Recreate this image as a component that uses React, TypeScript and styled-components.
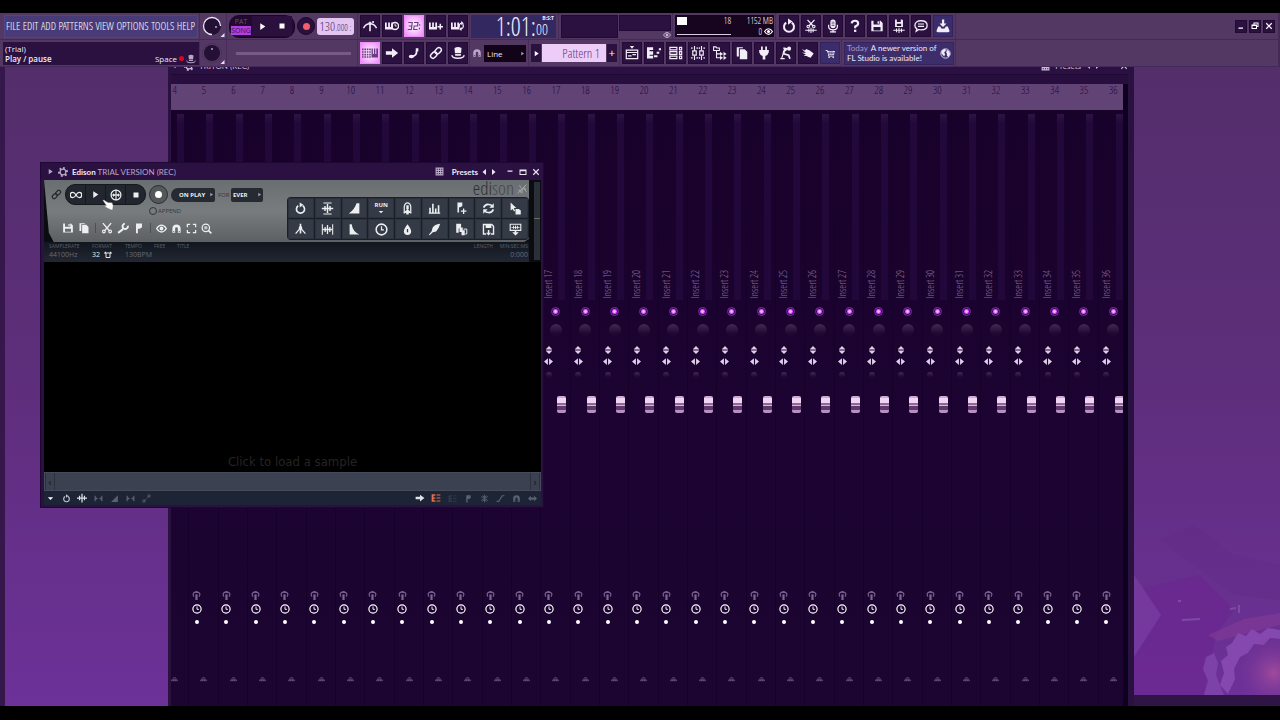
import React from "react";
import styled, { createGlobalStyle, css } from "styled-components";

const GlobalStyle = createGlobalStyle`
  * { box-sizing: border-box; }
  html, body { margin: 0; background: #000; }
  body { font-family: "Open Sans", "Noto Sans", sans-serif; color: #fff; overflow: hidden; }
  button, input, select { font: inherit; color: inherit; margin: 0; padding: 0; border: 0; background: none; border-radius: 0; }
  button { display: flex; align-items: center; justify-content: center; }
  svg { display: block; flex: none; }
`;

const narrow = `"Open Sans Condensed Light", "Open Sans Condensed", "Open Sans", sans-serif`;

/* ---------- icons, all on a 16 unit grid ---------- */

const line = { fill: "none", stroke: "currentColor", strokeWidth: 1.6 } as const;
const undoArt = (
  <>
    <path {...line} strokeWidth={2} d="M5.2 4.6A5 5 0 1 0 10.8 4.6" />
    <path d="M7 0.6v6.2L11.6 3.4z" />
  </>
);
const keysArt = <path d="M0 4h2v5h1.6V4h2v5h1.6V4h2v8H0z" />;
const saveArt = <path fillRule="evenodd" d="M1.5 2H12l2.5 2.5V14h-13zM4 2v4.2h7V2zM4 9v4h8V9zM8.6 2.6h1.6v2.8H8.6z" />;
const metronomeArt = (
  <>
    <path {...line} d="M8 6L2 13M8 6l6 7" />
    <path d="M7 1h2v12H7z" />
    <circle cx="8" cy="6" r="2.2" />
  </>
);
const magnetArt = <path fillRule="evenodd" d="M2 14V8a6 6 0 0 1 12 0v6h-4V8a2 2 0 0 0-4 0v6zM3 11.5v1.4h2v-1.4zM11 11.5v1.4h2v-1.4z" />;
const flagArt = <path d="M4 2h8v5l-3 2H6.5v6H4z" />;

const icons: Record<string, React.ReactNode> = {
  undo: undoArt,
  metronome: (
    <>
      <path {...line} d="M0.5 10.5Q3 5.5 8 5.5T15.5 10.5" />
      <path d="M7.1 3h1.8v11H7.1zM6 4h4l-2 5z" />
      <circle cx="11.5" cy="3.5" r="1.2" />
    </>
  ),
  waitInput: (
    <>
      {keysArt}
      <circle {...line} cx="11.5" cy="8" r="4" />
      <path {...line} strokeWidth={1} d="M11.5 5.5V8h2" />
    </>
  ),
  countdown: (
    <path {...line} strokeWidth={1.3} d="M1.5 4H6L5 12H0.8M2 8h3.4M8 4h4.5L12 8H8.2L7.6 12H12M14.5 6v1.6M14.2 10v1.6" />
  ),
  keyPlus: (
    <>
      {keysArt}
      <path d="M12 5.5h1.8V8H16v1.8h-2.2V12H12V9.8h-2.2V8H12z" />
    </>
  ),
  keyLoop: (
    <>
      {keysArt}
      <path {...line} strokeWidth={1.4} d="M9.8 9.8A3 3.4 0 0 1 12 4.6M13.4 5.8A3 3.4 0 0 1 11.4 11.4" />
      <path d="M11.6 2.4l3 2.4-3 2zM12 9l-3 2.4 3 2.2z" />
    </>
  ),
  typing: (
    <>
      <path {...line} strokeDasharray="1.6 0.8" d="M0 4.4h9M0 7h9M0 9.6h9M0 12h9" />
      <path d="M9.5 3.5h1.4V9h1V3.5h1.4V9h1V3.5H16v9H9.5z" />
    </>
  ),
  arrow: <path d="M1 6h7V2.6L15 8l-7 5.4V10H1z" />,
  slide: (
    <>
      <path {...line} strokeWidth={2} d="M6 12Q11 11 11 6" />
      <ellipse cx="5" cy="12" rx="3" ry="2" />
      <path d="M10 2.500h3v3.500l-3 1z" />
    </>
  ),
  link: (
    <g {...line} strokeWidth={1.7} transform="rotate(-45 8 8)">
      <rect x="0.5" y="5.2" width="8" height="5.4" rx="2.7" />
      <rect x="7.5" y="5.2" width="8" height="5.4" rx="2.7" />
    </g>
  ),
  hat: (
    <>
      <path d="M4 2.2Q8 0 12 2.2L11.2 11H4.8z" />
      <path {...line} d="M1.2 10.5Q0.8 14 8 14T14.8 10.5" />
      <path fill="#2b1440" d="M4.6 8.2h6.8v1H4.6z" />
    </>
  ),
  magnet: magnetArt,
  cutWave: (
    <>
      <path {...line} strokeWidth={1.5} d="M4 1l6.4 7M12 1L5.6 8" />
      <circle {...line} strokeWidth={1.3} cx="4.8" cy="8.6" r="1.4" />
      <circle {...line} strokeWidth={1.3} cx="11.2" cy="8.6" r="1.4" />
      <path d="M1.5 12.4h13v1h-13zM5 10.8h1.2V15H5zM7.4 10h1.2v6H7.4zM9.8 10.8H11V15H9.8z" />
    </>
  ),
  mic: (
    <>
      <rect x="5" y="0.5" width="6" height="10" rx="3" />
      <path {...line} strokeWidth={1.4} d="M3 6.5v2.4Q3 12.4 8 12.4T13 8.9V6.5M8 12v3" />
      <path d="M4.5 14h7v1.5h-7z" />
      <path fill="#55396d" d="M6.4 3h3.2v1H6.4zM6.4 5h3.2v1H6.4zM6.4 7h3.2v1H6.4z" />
    </>
  ),
  help: (
    <>
      <path {...line} strokeWidth={2.4} d="M4.2 5Q4.4 2 8 2T11.6 5Q11.6 7 8.2 8.4V10.6" />
      <path d="M6.9 12.2h2.6v2.6H6.9z" />
    </>
  ),
  save: saveArt,
  saveWave: (
    <>
      <path fillRule="evenodd" d="M3.5 0.5h8l1 1V9h-9zM5.5 0.5v3h4.5v-3zM5.5 5.5v2.5h5V5.5z" />
      <path d="M1.5 12.4h13v1h-13zM4.6 10.8h1.2V15H4.6zM7.4 10h1.2v6H7.4zM10.2 10.8h1.2V15h-1.2z" />
    </>
  ),
  chat: (
    <>
      <path {...line} strokeWidth={1.5} d="M8 2C12 2 15 4 15 7.3S12 12.4 8 12.4Q6.5 12.4 5.5 12L2.5 14L3.2 11Q1 9.5 1 7.3C1 4 4 2 8 2z" />
      <path {...line} strokeWidth={1.2} d="M4.5 5.8h7M4.5 8.4h7" />
    </>
  ),
  download: (
    <>
      <path d="M6.8 0.5h2.6V5h2.6L8 9.2L4 5h2.8z" />
      <path d="M2.5 8.5L5 8.5Q5 11 8 11T11 8.5L13.5 8.5L15.5 13.8Q15.5 15 14 15H2Q0.5 15 0.5 13.8z" />
    </>
  ),
  playlist: (
    <>
      <path d="M5.5 0h5L8 3z" />
      <path {...line} strokeWidth={1.4} d="M1.5 4.7h13v9.6h-13z" />
      <path d="M2 6.800h12V8H2zM3.500 10.500h4v1.500h-4zM8.500 9h4v1.500h-4z" />
    </>
  ),
  pianoRoll: (
    <path d="M0 1.5h7v3.2H3v1.2h4V10H3v1.2h4v3H0zM8 10.5h4v2.3H8zM11 6.5h3v2.3h-3zM13.5 2.5H16v2.3h-2.5z" />
  ),
  rack: (
    <g {...line} strokeWidth={1.3}>
      <path d="M1 1.5h8v3H1zM1 6.5h8v3H1zM1 11.5h8v3H1z" />
      <path d="M12 1.500h2.500v3H12zM12 6.500h2.500v3H12zM12 11.500h2.500v3H12z" />
    </g>
  ),
  faders: (
    <g {...line} strokeWidth={1.3}>
      <path d="M4 0v5M4 11v5M12 0v5M12 11v5" />
      <path d="M2 5.5h4v5H2zM10 5.5h4v5h-4zM1 1.500v2M7 1.500v2M9.500 1.500v2M15 1.500v2M1 12.500v2M7 12.500v2M9.500 12.500v2M15 12.500v2" />
    </g>
  ),
  tree: (
    <>
      <path {...line} strokeWidth={1.2} d="M0.7 1h2.6l1 1.2h3v3H0.7zM4 5v8.5h4M4 9h4" />
      <path d="M8 6.5L11.5 9L8 11.5zM12 6.5L15.5 9L12 11.5zM8 11L11.5 13.5L8 16zM12 11L15.5 13.5L12 16z" />
    </>
  ),
  docs: (
    <>
      <path d="M2 1.5h7v1.2H4.4V12H2z" />
      <path d="M5.5 3.7h5.5l3 3V15H5.5z" />
    </>
  ),
  plug: <path d="M4.6 0.5h2v4h2.8v-4h2v4H13.5V7Q12.5 10.5 9.5 11.5V15.5h-3v-4Q3.5 10.5 2.5 7V4.5h2.1z" />,
  dig: (
    <>
      <circle cx="11.5" cy="3" r="2.3" />
      <path {...line} strokeWidth={2} d="M10 3.5L5 2.5M8.5 4Q4.5 6 5.5 9L11 10.5L12.5 14.5" />
      <path {...line} strokeWidth={1.3} d="M6.5 3L3 14.5M1.5 14.5h5" />
    </>
  ),
  hand: <path d="M1 3.500L4.500 5 6 3.500l4 1.500 4.500 3.500L11 13.500Q8 13 6.500 11.500L3 11 5.500 9.800 1 7.500 5.500 8z" />,
  cart: (
    <>
      <path d="M1 3h2.6l0.5 1.5H14.5L13 10H5L2.8 4.2H1z" />
      <path {...line} strokeWidth={1.2} d="M5 10v1.8h8" />
      <circle cx="6" cy="13.6" r="1.2" />
      <circle cx="12" cy="13.6" r="1.2" />
      <path stroke="#3b2d6c" strokeWidth={0.8} d="M4 6.4h10M4.5 8.2h9M7 4.5v5.5M10 4.5v5.5" />
    </>
  ),
  globe: (
    <>
      <circle {...line} strokeWidth={1.2} cx="8" cy="8" r="6.8" />
      <path d="M2 4.5Q5 1 8 1.5L8.5 4 6 6.5 7.5 9 6 12.5 3.5 9.5 2 8zM10 2.5l3.5 2.5 1.2 4L12 13.5 10 11V8L9 6.5z" />
    </>
  ),
  gear: (
    <>
      <circle {...line} strokeWidth={2} cx="8" cy="8" r="4.6" />
      <path {...line} strokeWidth={3} strokeDasharray="3 3.8" d="M8 1.5a6.5 6.5 0 1 1 0 13a6.5 6.5 0 1 1 0-13" />
    </>
  ),
  grid: <path fillRule="evenodd" d="M1 1h14v14H1zM3 3v2h2V3zM7 3v2h2V3zM11 3v2h2V3zM3 7v2h2V7zM7 7v2h2V7zM11 7v2h2V7zM3 11v2h2v-2zM7 11v2h2v-2zM11 11v2h2v-2z" />,
  infinity: <path {...line} strokeWidth={1.7} d="M8 8Q6 4.5 3.8 4.5A3.3 3.3 0 0 0 3.8 11.5Q6 11.5 8 8Q10 4.5 12.2 4.5A3.3 3.3 0 0 1 12.2 11.5Q10 11.5 8 8z" />,
  play: <path d="M4 2l9 6-9 6z" />,
  stop: <path d="M3 3h10v10H3z" />,
  loop: (
    <>
      <circle {...line} strokeWidth={1.6} cx="8" cy="8" r="6.6" />
      <path {...line} strokeWidth={1.5} d="M8 1v14M1.5 8h13" />
      <path d="M4 5.5v5L7 8zM12 5.5v5L9 8z" />
    </>
  ),
  scissors: (
    <>
      <path {...line} strokeWidth={1.9} d="M2.5 1.5l8.5 10M13.5 1.5L5 11.5" />
      <circle {...line} cx="3.8" cy="12.6" r="1.8" />
      <circle {...line} cx="12.2" cy="12.6" r="1.8" />
    </>
  ),
  wrench: <path {...line} strokeWidth={2.6} d="M1.5 14.5L8 9.5M14.5 5A3.6 3.6 0 1 1 10.5 2.2" />,
  flag: flagArt,
  eye: (
    <>
      <path {...line} strokeWidth={2} d="M1 8Q4 3 8 3T15 8Q12 13 8 13T1 8z" />
      <circle cx="8" cy="8" r="2.8" />
    </>
  ),
  brackets: <path {...line} strokeWidth={1.8} d="M2 6V2h4M10 2h4v4M14 10v4h-4M6 14H2v-4" />,
  zoom: (
    <>
      <circle {...line} strokeWidth={1.8} cx="7" cy="7" r="5.4" />
      <circle cx="7" cy="7" r="2.6" opacity="0.7" />
      <path {...line} strokeWidth={2.4} d="M11 11l4 4" />
    </>
  ),
  normalize: (
    <path d="M3 0.5h10v1.4H3zM3 14h10v1.4H3zM1 7.2h14v1.6H1zM4 5h1.8v6H4zM7.1 2.5h1.8v11H7.1zM10.2 5H12v6h-1.8z" />
  ),
  fadeIn: <path d="M1 14Q8 9.500 10.500 1.5H14V14z" />,
  fadeOut: <path d="M2 1.5h2.5Q6 11 14 14H2z" />,
  bell: (
    <>
      <path {...line} strokeWidth={1.5} d="M4 14V5.5Q5 1 8 1T12 5.5V14" />
      <path d="M6.5 4h3v5h-3zM3 13.5L8 8.5L13 13.5zM6.5 12h3v3.5h-3z" />
    </>
  ),
  bars: <path d="M1 13h14v1.5H1zM1.5 7h2v6h-2zM5 2h2v11H5zM8.5 8h2v5h-2zM12 4h2v9h-2z" />,
  flagPlus: (
    <>
      <path d="M3 0.5h6v4.5L6.5 6.5H5V13H3z" />
      <path d="M9.8 8h1.6v2.5H14v1.6h-2.6v2.6H9.8v-2.6H7.2v-1.6h2.6z" />
    </>
  ),
  swap: (
    <>
      <path {...line} strokeWidth={2} d="M2 7Q4 2.5 8 3T12 5M14 9Q12 13.5 8 13T4 11" />
      <path d="M14.5 1.5V7H9zM1.5 14.5V9H7z" />
    </>
  ),
  pointerDoc: (
    <>
      <path d="M2 0.5L9 7.5H6L7.5 11 6 11.5 4.5 8.5 2 10.5z" />
      <path d="M8 8.5h4l2.5 2V15.5H8z" />
    </>
  ),
  beat: metronomeArt,
  squeeze: <path d="M1 1.5h1.3v13H1zM13.7 1.5H15v13h-1.3zM2.5 7.2h11v1.6h-11zM4.3 5h1.6v6H4.3zM7.2 2.5h1.6v11H7.2zM10.1 5h1.6v6h-1.6z" />,
  clock: (
    <>
      <circle {...line} strokeWidth={1.9} cx="8" cy="8" r="6.6" />
      <path {...line} strokeWidth={1.5} d="M8 4v4.5h3" />
    </>
  ),
  drop: <path fillRule="evenodd" d="M8 1.5Q12.5 7.5 12.5 10.2A4.5 4.5 0 0 1 3.5 10.2Q3.5 7.5 8 1.5zM7.2 7.5v4h1.6v-4z" />,
  brush: <path d="M15 1Q8 1.5 5.5 6L4.5 10 1 14.5 2 15 6 11.5 10 10.5Q13.5 7 15 1z" />,
  flagDoc: (
    <>
      <path d="M1.5 1h6v4.5l-3 1.5V12H1.5z" />
      <path d="M5.5 5.5h4V9H12v6H8V11H5.5z" />
      <path {...line} strokeWidth={1.2} d="M10.5 7.5h4v6h-2" />
    </>
  ),
  saveDown: (
    <>
      <path {...line} strokeWidth={1.700} d="M5 13.500H1.800V1.800H12L14.200 4V13.500H11" />
      <path d="M4.500 2h7v4h-7zM7.2 8.500H9v3.500h2.2L8.1 15.5 5 12h2.2z" />
    </>
  ),
  waveDown: (
    <>
      <path {...line} strokeWidth={1.4} d="M1.5 1.5h13v7.5h-13z" />
      <path d="M3 4.8h10v1H3zM5 3.5h1.2v3.5H5zM7.5 3h1.2v4.5H7.5zM10 3.5h1.2v3.5H10zM7 9.5h2v2h3L8 15.5 4 11.5h3z" />
    </>
  ),
  down: <path d="M2 5h12l-6 6.5z" />,
  cross: <path d="M0 7h16v2H0zM3.200 4.500H5v7H3.200zM7 1h2v14H7zM11 4.500h1.800v7H11z" />,
  bowtie: <path d="M1 3h2v2.5L7 8l-4 2.5V13H1zM15 3h-2v2.5L9 8l4 2.5V13h2z" />,
  ramp: <path d="M2 14L14 2v12z" />,
  nodes: (
    <>
      <path {...line} d="M4 12L12 4" strokeDasharray="2 1" />
      <circle {...line} cx="3.5" cy="12.5" r="2.2" />
      <circle {...line} cx="12.5" cy="3.5" r="2.2" />
    </>
  ),
  list: <path d="M1 2h6v2.5H4V7h3v2.2H4v2.5h3V14H1zM9 2.5h6V4H9zM9 7.2h6v1.6H9zM9 12h6v1.6H9z" />,
  snow: <path {...line} d="M8 1v14M2 4.5l12 7M14 4.5l-12 7M4.5 3L8 6l3.5-3M4.5 13L8 10l3.5 3" />,
  curve: <path {...line} strokeWidth={2} d="M1 13h4L11 3h4" />,
  both: <path d="M0 8l5-5v3h6V3l5 5-5 5v-3H5v3z" />,
  lamp: (
    <>
      <path {...line} strokeWidth={2} d="M3.5 10Q0.5 5 3.5 3T12.5 3Q15.5 5 12.5 10" />
      <path d="M6 6h4v10H6z" />
      <path d="M5 0.5h6v2H5z" />
    </>
  ),
  roof: <path {...line} strokeWidth={1.6} d="M0.500 13L8 4.500L15.500 13zM6 13V10h4v3" />,
  updown: <path d="M8 0L14 6H2zM8 16L2 10h12zM2 7.2h12v1.6H2z" />,
  leftright: <path d="M0 8L7 2v12zM16 8L9 2v12z" />,
  windowMin: <path d="M3 11h9v2.5H3z" />,
  windowRestore: <path fillRule="evenodd" d="M5 1h10v9h-3v4H1V5h4zM3 8v4h7V8zM7 3v2h5v3h1V3z" />,
  windowMax: <path fillRule="evenodd" d="M1 3h14v11H1zM3 6.5V12h10V6.5z" />,
  titleMin: <path d="M3 5h10v2.5H3z" />,
  format: <path {...line} strokeWidth={2} d="M0 4h16M4 4v9h8V4M3 1.5v3M13 1.5v3" />,
  close: <path {...line} strokeWidth={2.3} d="M2.5 2.5l11 11M13.5 2.5l-11 11" />,
  pointerHand: (
    <path fill="#fff" stroke="#5c6065" strokeWidth={0.5} d="M1 1.5Q3 0.5 5 3l3 1.5L13.5 5 15 9l-1 6-4-1.5L5 11 3 8.5l3 0.5z" />
  ),
  mark: <path {...line} strokeWidth={1.5} d="M1 15L15 1M2 10h4v4M8 8v7M8 8h6M11 5l4 8M4 2l3 5" />,
};

const Icon = ({ name, size = 14 }: { name: string; size?: number }) => (
  <svg width={size} height={size} viewBox="0 0 16 16" fill="currentColor" aria-hidden="true">
    {icons[name]}
  </svg>
);

const PrevNext = () => (
  <svg width="14" height="8" viewBox="0 0 14 8" fill="currentColor" aria-hidden="true">
    <path d="M4 1v6L0.5 4zM10 1v6L13.5 4z" />
  </svg>
);

/* ---------- main toolbar ---------- */

const Screen = styled.div`
  display: flex;
  flex-direction: column;
  height: 100vh;
  padding: 13px 0 14px;
  background: #000;
`;
const Toolbar = styled.header`
  position: relative;
  z-index: 3;
  background: #543864;
  border-right: 2px solid #432b55;
`;
const ToolRow = styled.div`
  display: flex;
  height: 27px;
  border-bottom: 1px solid #44295a;
`;
const Segment = styled.div<{ $w: number; $pad?: number; $gap?: number }>`
  display: flex;
  align-items: center;
  flex: none;
  gap: ${(p) => p.$gap ?? 2}px;
  width: ${(p) => p.$w}px;
  padding-left: ${(p) => p.$pad ?? 2}px;
  border-right: 1px solid #472d5b;
`;
const Spacer = styled.div`
  flex: 1;
`;
const Menu = styled.nav`
  display: flex;
  align-items: center;
  justify-content: space-between;
  width: 194px;
  height: 23px;
  padding: 0 2px 0 1px;
  background: #483b78;
  border: 1px solid #54438a;
  font: 300 11px/16px ${narrow};
`;
const MenuItem = styled.button`
  color: #fff;
`;
const Hint = styled.div`
  display: flex;
  justify-content: space-between;
  align-items: flex-end;
  width: 196px;
  height: 23px;
  padding: 0 3px 1px 2px;
  background: #2a1140;
  font-size: 8px;
  line-height: 10px;
  color: #f0e8f7;
`;
const HintText = styled.div`
  font-weight: 600;
`;
const HintTop = styled.div`
  font-weight: 400;
`;
const HintKey = styled.div`
  display: flex;
  align-items: center;
  gap: 2px;
`;
const RedDot = styled.i`
  width: 5px;
  height: 5px;
  border-radius: 50%;
  background: #d80a1c;
`;
const Pill = styled.div`
  display: flex;
  align-items: center;
  width: 66px;
  height: 23px;
  border-radius: 10px;
  background: #22092f;
  border: 1px solid #1a0529;
`;
const ModeToggle = styled.button`
  flex-direction: column;
  width: 22px;
  font: 7px/9px "Open Sans", sans-serif;
  color: #67507a;
`;
const ModeOn = styled.span`
  width: 20px;
  background: #b23fdf;
  color: #3a0d57;
`;
const PillButton = styled.button`
  width: 20px;
  height: 20px;
  background: #2b0f3d;
`;
const Record = styled.button`
  width: 18px;
  height: 18px;
  border-radius: 50%;
  background: #2b0f3d;
  border: 1px solid #1d0730;
  &::after {
    content: "";
    width: 7px;
    height: 7px;
    border-radius: 50%;
    background: #f0606a;
  }
`;
const Tempo = styled.button`
  align-items: baseline;
  width: 37px;
  height: 17px;
  border-radius: 3px;
  background: #e4c5f2;
  color: #4b2c62;
  font: 300 13px/17px ${narrow};
`;
const Small = styled.small`
  font-size: 9px;
`;
const Tool = styled.button<{ $tone?: "lit" | "blue" }>`
  flex: none;
  width: 20px;
  height: 22px;
  background: #2b1140;
  border: 1px solid #220a35;
  color: #f3edf8;
  ${(p) =>
    p.$tone === "lit" &&
    css`
      background: radial-gradient(#fbe6ff 20%, #ee86fb);
      border-color: #ef8cf8;
      color: #6d3b86;
    `}
  ${(p) =>
    p.$tone === "blue" &&
    css`
      background: #3b2d6c;
      border-color: #322260;
    `}
`;
const TimeBox = styled.div`
  display: flex;
  align-items: center;
  justify-content: flex-end;
  width: 85px;
  height: 23px;
  padding-right: 2px;
  background: #33285f;
  font: 300 25px/23px ${narrow};
  color: #f2ecfb;
`;
const TimeTail = styled.span`
  display: flex;
  flex-direction: column;
  width: 18px;
  font-size: 15px;
  line-height: 15px;
`;
const TimeUnit = styled.span`
  align-self: flex-end;
  font: 700 5px/7px "Open Sans", sans-serif;
`;
const Monitor = styled.div<{ $w: number; $h: number }>`
  align-self: flex-start;
  flex: none;
  width: ${(p) => p.$w}px;
  height: ${(p) => p.$h}px;
  margin-top: 2px;
  background: #2a1140;
  border: 1px solid #220a35;
`;
const MonitorStack = styled.div`
  display: flex;
  flex-direction: column;
  align-items: flex-end;
  color: #c3b5cf;
`;
const Cpu = styled.div`
  display: grid;
  grid-template-columns: 12px 1fr 42px;
  width: 99px;
  height: 22px;
  padding: 0 2px;
  background: #17041f;
  font: 300 9px/11px ${narrow};
  text-align: right;
`;
const CpuBlock = styled.div`
  width: 10px;
  height: 8px;
  margin-top: 2px;
  background: #fff;
`;
const CpuLine = styled.div`
  grid-column: span 2;
  height: 9px;
  width: 54px;
  border-bottom: 1px solid #d8cde2;
`;
const CpuFoot = styled.div`
  display: flex;
  justify-content: flex-end;
  align-items: center;
  gap: 2px;
`;
const WindowButtons = styled.div`
  display: flex;
  align-items: center;
  gap: 2px;
  padding-right: 3px;
`;
const WindowButton = styled.button`
  width: 12px;
  height: 13px;
  background: #2b1140;
  border: 1px solid #220a35;
`;
const Slider = styled.input`
  appearance: none;
  width: 115px;
  height: 3px;
  margin-left: 7px;
  background: #775a88;
  &::-webkit-slider-thumb {
    appearance: none;
    width: 0;
    height: 0;
  }
`;
const Select = styled.select<{ $w: number }>`
  appearance: none;
  width: ${(p) => p.$w}px;
  height: 17px;
  padding-left: 3px;
  background: #120318;
  font-size: 8px;
  line-height: 17px;
  color: #efe8f5;
`;
const SelectWrap = styled.label`
  display: flex;
  align-items: center;
`;
const Caret = styled.span`
  display: flex;
  width: 6px;
  margin-left: -6px;
  pointer-events: none;
  opacity: 0.6;
`;
const MagnetBox = styled.span`
  display: flex;
  color: #b9a6c8;
`;
const Step = styled.button`
  width: 10px;
  height: 18px;
  background: #2b1140;
  font-size: 11px;
  line-height: 16px;
`;
const PatternInput = styled.input`
  width: 64px;
  height: 18px;
  padding-right: 6px;
  background: #edcdf8;
  color: #5a3874;
  text-align: right;
  font: 300 13px/18px ${narrow};
`;
const News = styled.a`
  display: flex;
  align-items: center;
  justify-content: space-between;
  width: 110px;
  height: 23px;
  padding: 0 2px;
  background: #3d2d6b;
  border: 1px solid #35245f;
  color: #eee8f8;
  text-decoration: none;
  font: 8px/10px Lato, "Open Sans", sans-serif;
  white-space: nowrap;
`;
const Muted = styled.span`
  color: #a998c4;
  margin-right: 3px;
`;

const Knob = ({ ring }: { ring?: boolean }) => (
  <svg width="24" height="24" viewBox="0 0 24 24" aria-hidden="true">
    <circle cx="10" cy="12" r={ring ? 9 : 8} fill="#251035" />
    {ring ? (
      <path d="M10 20.5A8.5 8.5 0 1 1 18.5 12" fill="none" stroke="#efe6f6" strokeWidth="1.3" />
    ) : (
      <circle cx="10" cy="12" r="9.5" fill="none" stroke="#402653" strokeDasharray="1 1.5" />
    )}
    <circle cx={ring ? 14 : 10} cy={ring ? 13 : 8} r="1" fill="#b7a2c8" />
    <path d="M22.5 19v4h-4z" fill="#e8def0" />
  </svg>
);

const menus = ["FILE", "EDIT", "ADD", "PATTERNS", "VIEW", "OPTIONS", "TOOLS", "HELP"];

const Tools = ({ names, lit, blue }: { names: string[]; lit?: string; blue?: string }) => (
  <>
    {names.map((n) => (
      <Tool key={n} aria-label={n} $tone={n === lit ? "lit" : n === blue ? "blue" : undefined}>
        <Icon name={n} size={n === "cart" ? 11 : n === "undo" || n === "typing" ? 16 : 14} />
      </Tool>
    ))}
  </>
);

const MainToolbar = () => (
  <Toolbar>
    <ToolRow>
      <Segment $w={200} $pad={4}>
        <Menu>
          {menus.map((m) => (
            <MenuItem key={m}>{m}</MenuItem>
          ))}
        </Menu>
      </Segment>
      <Segment $w={27}>
        <Knob ring />
      </Segment>
      <Segment $w={131}>
        <Pill>
          <ModeToggle>
            <span>PAT</span>
            <ModeOn>SONG</ModeOn>
          </ModeToggle>
          <PillButton aria-label="Play">
            <Icon name="play" size={9} />
          </PillButton>
          <PillButton aria-label="Stop">
            <Icon name="stop" size={8} />
          </PillButton>
        </Pill>
        <Record aria-label="Record" />
        <Tempo>
          130<Small>.000 :</Small>
        </Tempo>
      </Segment>
      <Segment $w={112}>
        <Tools names={["metronome", "waitInput", "countdown", "keyPlus", "keyLoop"]} lit="countdown" />
      </Segment>
      <Segment $w={89} $pad={1}>
        <TimeBox>
          1:01:
          <TimeTail>
            <TimeUnit>B:S:T</TimeUnit>
            00
          </TimeTail>
        </TimeBox>
      </Segment>
      <Segment $w={114} $gap={1}>
        <Monitor $w={57} $h={23} />
        <MonitorStack>
          <Monitor $w={52} $h={16} />
          <Icon name="eye" size={8} />
        </MonitorStack>
      </Segment>
      <Segment $w={103}>
        <Cpu>
          <CpuBlock />
          <span>18</span>
          <span>1152 MB</span>
          <CpuLine />
          <CpuFoot>
            0 <Icon name="eye" size={9} />
          </CpuFoot>
        </Cpu>
      </Segment>
      <Segment $w={180} $pad={3}>
        <Tools names={["undo", "cutWave", "mic", "help", "save", "saveWave", "chat", "download"]} blue="download" />
      </Segment>
      <Spacer />
      <WindowButtons>
        <WindowButton aria-label="Minimize">
          <Icon name="windowMin" size={8} />
        </WindowButton>
        <WindowButton aria-label="Restore">
          <Icon name="windowRestore" size={8} />
        </WindowButton>
        <WindowButton aria-label="Close">
          <Icon name="close" size={8} />
        </WindowButton>
      </WindowButtons>
    </ToolRow>
    <ToolRow>
      <Segment $w={200} $pad={3}>
        <Hint>
          <HintText>
            <HintTop>(Trial)</HintTop>
            Play / pause
          </HintText>
          <HintKey>
            Space <RedDot />
            <MagnetBox>
              <Icon name="hat" size={10} />
            </MagnetBox>
          </HintKey>
        </Hint>
      </Segment>
      <Segment $w={27}>
        <Knob />
      </Segment>
      <Segment $w={131}>
        <Slider type="range" aria-label="Song position" />
      </Segment>
      <Segment $w={112}>
        <Tools names={["typing", "arrow", "slide", "link", "hat"]} lit="typing" />
      </Segment>
      <Segment $w={59}>
        <MagnetBox>
          <Icon name="magnet" size={10} />
        </MagnetBox>
        <SelectWrap>
          <Select $w={42} aria-label="Snap" defaultValue="Line">
            <option>Line</option>
          </Select>
          <Caret>
            <Icon name="play" size={5} />
          </Caret>
        </SelectWrap>
      </Segment>
      <Segment $w={91} $gap={1}>
        <Step aria-label="Pattern menu">
          <Icon name="play" size={7} />
        </Step>
        <PatternInput aria-label="Pattern" defaultValue="Pattern 1" />
        <Step>+</Step>
      </Segment>
      <Segment $w={222}>
        <Tools
          names={["playlist", "pianoRoll", "rack", "faders", "tree", "docs", "plug", "dig", "hand", "cart"]}
          blue="cart"
        />
      </Segment>
      <Segment $w={114}>
        <News href="#">
          <span>
            <Muted>Today</Muted>A newer version of
            <br />
            FL Studio is available!
          </span>
          <Icon name="globe" size={11} />
        </News>
      </Segment>
    </ToolRow>
  </Toolbar>
);

/* ---------- mixer ---------- */

const Desktop = styled.main`
  position: relative;
  flex: 1;
  overflow: hidden;
  background: linear-gradient(#542e6b, #5e2e7c 50%, #6d3199);
  border-left: 5px solid #35174b;
`;
const Wallpaper = styled.svg`
  position: absolute;
  right: 0;
  bottom: 11px;
`;
const DesktopStrip = styled.div`
  position: absolute;
  right: 0;
  bottom: 0;
  width: 146px;
  height: 11px;
  background: #2f1545;
`;
const MixerWindow = styled.section`
  position: absolute;
  left: 163px;
  right: 146px;
  top: -9px;
  bottom: 0;
  display: flex;
  flex-direction: column;
  background: #1c0531;
  border: solid #29123f;
  border-width: 0 6px 0 3px;
`;
const MixerTitle = styled.div`
  display: flex;
  align-items: center;
  gap: 5px;
  height: 16px;
  padding-left: 2px;
  background: #2b1143;
  font: 8px/18px Lato, "Open Sans", sans-serif;
  color: #c9bcd4;
`;
const TitleGap = styled.div`
  width: 10px;
`;
const MixerBody = styled.div`
  flex: 1;
  display: flex;
  padding-right: 5px;
  border-top: 1px solid #1f0834;
  background: linear-gradient(#280e3f 9px, #0e0120 9px);
`;
const TrackClip = styled.div`
  flex: 1;
  display: flex;
  overflow: hidden;
  padding-top: 9px;
`;
const Tracks = styled.div`
  flex: none;
  display: grid;
  grid-template-columns: repeat(33, 1fr);
  width: calc(100% + 16px);
  margin-left: -11px;
`;
const Track = styled.div`
  display: flex;
  flex-direction: column;
  min-width: 0;
  box-shadow: inset -1px 0 #15012a;
  background: linear-gradient(#180129, #1c0331 50%, #1c0531);
`;
const Slot = styled.div<{ $h: number; $side?: "left" | "right"; $top?: number }>`
  flex: none;
  display: flex;
  flex-direction: column;
  align-items: center;
  justify-content: center;
  height: ${(p) => p.$h}px;
  padding-top: ${(p) => p.$top ?? 0}px;
  padding-left: ${(p) => (p.$side === "right" ? 12 : 0)}px;
  padding-right: ${(p) => (p.$side === "left" ? 14 : 0)}px;
`;
const TrackNumber = styled.div`
  height: 26px;
  background: #614376;
  color: #230b38;
  text-align: center;
  font: 300 11px/12px ${narrow};
`;
const Meter = styled.div`
  width: 7px;
  height: 186px;
  margin-bottom: -38px;
  background: linear-gradient(#2e1444, #23093a 5%, #21073a);
`;
const TrackLabel = styled.div`
  writing-mode: vertical-rl;
  transform: rotate(180deg);
  font: 300 10px/11px ${narrow};
  color: #8a739d;
  white-space: nowrap;
`;
const Led = styled.i`
  width: 9px;
  height: 9px;
  border-radius: 50%;
  border: 1px solid #7b2ba8;
  background: radial-gradient(#f7a8ff 20%, #c23aea 45%, #3a0d57 60%);
`;
const PanKnob = styled.i<{ $d: number }>`
  flex: none;
  width: ${(p) => p.$d}px;
  height: ${(p) => p.$d}px;
  border-radius: 50%;
  background: linear-gradient(#432a53, #1f0733 80%);
`;
const Arrows = styled.div`
  display: flex;
  flex-direction: column;
  align-items: center;
  gap: 3px;
  color: #ddd0e6;
`;
const Fader = styled.i`
  width: 9px;
  height: 17px;
  border-radius: 2px;
  background: linear-gradient(#cfa9d6 0 2px, #efd5f1 2px 7px, #8d6898 7px 9px, #d8b4de 9px 10px, #5d3a69 10px 14px, #b88fc2 14px);
`;
const Sends = styled.div`
  display: grid;
  grid-template-rows: 15px 12px 14px;
  place-items: center;
`;
const Dim = styled.span`
  color: #7b6490;
`;
const Dot = styled.i`
  width: 4px;
  height: 4px;
  border-radius: 50%;
  background: #fff;
`;

const trackNumbers = Array.from({ length: 33 }, (_, i) => i + 4);

const Mixer = () => (
  <MixerWindow>
    <MixerTitle>
      <Icon name="play" size={6} />
      <Icon name="gear" size={10} />
      <span>TRITON (REC)</span>
      <Spacer />
      <Icon name="grid" size={9} />
      <span>Presets</span>
      <PrevNext />
      <TitleGap />
      <Icon name="close" size={8} />
    </MixerTitle>
    <MixerBody>
      <TrackClip>
        <Tracks>
          {trackNumbers.map((n) => (
            <Track key={n}>
              <TrackNumber>{n}</TrackNumber>
              <Slot $h={156} $side="right">
                <Meter />
              </Slot>
              <Slot $h={37} $side="left">
                {n > 4 && <TrackLabel>Insert {n}</TrackLabel>}
              </Slot>
              <Slot $h={16}>
                <Led />
              </Slot>
              <Slot $h={21}>
                <PanKnob $d={12} />
              </Slot>
              <Slot $h={31} $side="left">
                <Arrows>
                  <Icon name="updown" size={8} />
                  <Icon name="leftright" size={9} />
                </Arrows>
              </Slot>
              <Slot $h={8} $side="left">
                <PanKnob $d={6} />
              </Slot>
              <Slot $h={50} $side="right">
                <Fader />
              </Slot>
              <Spacer />
              <Slot $h={41} $side="left">
                {n > 4 && (
                  <Sends>
                    <Dim>
                      <Icon name="lamp" size={9} />
                    </Dim>
                    <Icon name="clock" size={10} />
                    <Dot />
                  </Sends>
                )}
              </Slot>
              <Slot $h={77} $top={21}>
                <Dim>
                  <Icon name="roof" size={7} />
                </Dim>
              </Slot>
            </Track>
          ))}
        </Tracks>
      </TrackClip>
    </MixerBody>
  </MixerWindow>
);

/* ---------- Edison ---------- */

const EdisonWindow = styled.section`
  position: absolute;
  left: 35px;
  top: 95px;
  width: 504px;
  height: 346px;
  display: flex;
  flex-direction: column;
  padding: 0 2px 2px 3px;
  background: #2a1142;
  border: 1px solid #1d0833;
`;
const EdisonTitle = styled.div`
  display: flex;
  align-items: center;
  height: 17px;
  gap: 4px;
  padding: 0 1px 0 3px;
  font: 8px/16px Lato, "Open Sans", sans-serif;
  color: #b9a8c6;
`;
const Bright = styled.b`
  font-weight: 700;
  color: #efe8f4;
`;
const TitleButtons = styled.div`
  display: flex;
  align-items: center;
  gap: 5px;
  color: #eee6f3;
`;
const TitleButton = styled.button``;
const EdisonTop = styled.div`
  display: flex;
  height: 82px;
  background: #0b0c10;
`;
const EdisonMain = styled.div`
  flex: 1;
  display: flex;
  flex-direction: column;
`;
const Panel = styled.div`
  display: flex;
  justify-content: space-between;
  height: 62px;
  padding-left: 7px;
  color: #eceef0;
  background: linear-gradient(#696e70, #787c7e 50%, #5c6063);
  clip-path: polygon(0 0, 100% 0, 100% 95%, 99% 100%, 2% 100%, 1% 85%);
`;
const Controls = styled.div`
  display: flex;
  flex-direction: column;
  padding-top: 4px;
`;
const ControlRow = styled.div<{ $h: number; $gap?: number; $pad?: number }>`
  display: flex;
  align-items: center;
  height: ${(p) => p.$h}px;
  gap: ${(p) => p.$gap ?? 3}px;
  padding-left: ${(p) => p.$pad ?? 0}px;
`;
const DarkInk = styled.span`
  display: flex;
  color: #23272b;
`;
const Transport = styled.div`
  display: flex;
  width: 81px;
  height: 21px;
  border-radius: 10px;
  background: #22272f;
  border: 1px solid #15181d;
`;
const TransportButton = styled.button`
  flex: 1;
  & + & {
    border-left: 1px solid #15191f;
  }
`;
const EdisonRecord = styled.button`
  width: 19px;
  height: 19px;
  border-radius: 50%;
  background: #54585b;
  border: 1px solid #2b2e32;
  &::after {
    content: "";
    width: 7px;
    height: 7px;
    border-radius: 50%;
    background: #fff;
  }
`;
const EdisonSelect = styled.select<{ $w: number; $point?: boolean }>`
  appearance: none;
  width: ${(p) => p.$w}px;
  height: 14px;
  padding-left: ${(p) => (p.$point ? 8 : 2)}px;
  background: #252a33;
  border-radius: ${(p) => (p.$point ? "7px 2px 2px 7px" : "2px")};
  font-size: 6px;
  font-weight: 700;
  line-height: 14px;
`;
const PanelText = styled.span`
  width: 10px;
  font-size: 6px;
  color: #33373b;
`;
const Append = styled.label`
  display: flex;
  align-items: center;
  gap: 1px;
  font-size: 6px;
  color: #33373b;
`;
const Radio = styled.input`
  appearance: none;
  width: 8px;
  height: 8px;
  border: 1px solid #33373b;
  border-radius: 50%;
`;
const PlainButton = styled.button``;
const Divider = styled.i`
  width: 1px;
  height: 10px;
  margin: 0 1px;
  background: #4c5053;
`;
const Right = styled.div`
  display: flex;
  flex-direction: column;
  align-items: flex-end;
  width: 242px;
`;
const Logo = styled.div`
  display: flex;
  align-items: center;
  gap: 3px;
  height: 17px;
  color: #a6aaac;
  padding-right: 2px;
`;
const LogoText = styled.span`
  font: 300 19px/17px ${narrow};
  color: #2b2f32;
`;
const LogoTail = styled.span`
  color: #44484b;
`;
const Pads = styled.div`
  display: grid;
  grid-template-columns: repeat(9, 1fr);
  gap: 1px;
  width: 242px;
  padding: 1px;
  border-radius: 4px;
  overflow: hidden;
  background: #1b1f26;
`;
const Pad = styled.button`
  flex-direction: column;
  height: 20px;
  background: #353b46;
  border: 1px solid #2c313b;
  font: 700 6px/7px "Open Sans", sans-serif;
`;
const Info = styled.div`
  display: flex;
  flex: 1;
  padding: 1px 1px 0 5px;
  background: linear-gradient(#12161e, #222733);
`;
const Field = styled.div<{ $w?: number; $end?: boolean }>`
  display: flex;
  flex-direction: column;
  width: ${(p) => (p.$w ? `${p.$w}px` : "auto")};
  text-align: ${(p) => (p.$end ? "right" : "left")};
  font-size: 7px;
  line-height: 9px;
  color: #666c76;
`;
const FieldName = styled.span`
  font-size: 5px;
  line-height: 7px;
  color: #59606b;
`;
const FieldValue = styled.span<{ $on?: boolean }>`
  display: flex;
  align-items: center;
  gap: 4px;
  color: ${(p) => (p.$on ? "#e6e8ec" : "inherit")};
`;
const Level = styled.div`
  display: flex;
  justify-content: center;
  width: 12px;
  padding: 2px 0 2px 3px;
  background: #0b0c10;
`;
const LevelBar = styled.div`
  width: 6px;
  background: linear-gradient(#2b2f37 46%, #6c6a5c 46% 48%, #2b2f37 48%);
`;
const Wave = styled.div`
  flex: 1;
  display: flex;
  align-items: flex-end;
  justify-content: center;
  padding-bottom: 2px;
  background: #000;
  color: #242424;
  font: 13px/16px "DejaVu Sans Condensed", "DejaVu Sans", sans-serif;
`;
const ScrollBar = styled.div`
  display: flex;
  justify-content: space-between;
  height: 19px;
  background: #3b4150;
  border: 1px solid #454b5a;
`;
const ScrollButton = styled.button`
  width: 10px;
  font-size: 10px;
  color: #12161f;
  border: solid #2b303d;
  border-width: 0 1px;
`;
const Footer = styled.div`
  display: flex;
  align-items: center;
  height: 14px;
  gap: 6px;
  padding: 0 4px 0 1px;
  background: #1d2436;
`;
const FooterButton = styled.button<{ $ink?: string }>`
  width: 10px;
  color: ${(p) => p.$ink ?? "#596072"};
`;
const Pointer = styled.div`
  position: absolute;
  left: 61px;
  top: 36px;
`;

const pads = [
  "undo", "normalize", "fadeIn", "run", "bell", "bars", "flagPlus", "swap", "pointerDoc",
  "beat", "squeeze", "fadeOut", "clock", "drop", "brush", "flagDoc", "saveDown", "waveDown",
];

const IconButtons = ({ names, size }: { names: string[]; size: number }) => (
  <>
    {names.map((n) => (
      <PlainButton key={n} aria-label={n}>
        <Icon name={n} size={size} />
      </PlainButton>
    ))}
  </>
);

const Edison = () => (
  <EdisonWindow>
    <EdisonTitle>
      <Icon name="play" size={7} />
      <Icon name="gear" size={10} />
      <span>
        <Bright>Edison</Bright> TRIAL VERSION (REC)
      </span>
      <Spacer />
      <Icon name="grid" size={9} />
      <span />
      <Bright>Presets</Bright>
      <TitleButtons>
        <PrevNext />
        <span />
        <TitleButton aria-label="Minimize">
          <Icon name="titleMin" size={8} />
        </TitleButton>
        <TitleButton aria-label="Maximize">
          <Icon name="windowMax" size={8} />
        </TitleButton>
        <TitleButton aria-label="Close">
          <Icon name="close" size={8} />
        </TitleButton>
      </TitleButtons>
    </EdisonTitle>
    <EdisonTop>
      <EdisonMain>
        <Panel>
          <Controls>
            <ControlRow $h={21}>
              <DarkInk>
                <Icon name="link" size={11} />
              </DarkInk>
              <Transport>
                <TransportButton aria-label="Loop">
                  <Icon name="infinity" size={12} />
                </TransportButton>
                <TransportButton aria-label="Play">
                  <Icon name="play" size={9} />
                </TransportButton>
                <TransportButton aria-label="Scrub">
                  <Icon name="loop" size={12} />
                </TransportButton>
                <TransportButton aria-label="Stop">
                  <Icon name="stop" size={8} />
                </TransportButton>
              </Transport>
              <EdisonRecord aria-label="Record" />
              <SelectWrap>
                <EdisonSelect $w={44} $point aria-label="Record mode" defaultValue="ON PLAY">
                  <option>ON PLAY</option>
                </EdisonSelect>
                <Caret>
                  <Icon name="play" size={5} />
                </Caret>
              </SelectWrap>
              <PanelText>FOR</PanelText>
              <SelectWrap>
                <EdisonSelect $w={32} aria-label="Record length" defaultValue="EVER">
                  <option>EVER</option>
                </EdisonSelect>
                <Caret>
                  <Icon name="play" size={5} />
                </Caret>
              </SelectWrap>
            </ControlRow>
            <ControlRow $h={12} $pad={98}>
              <Append>
                <Radio type="radio" />
                APPEND
              </Append>
            </ControlRow>
            <ControlRow $h={22} $gap={4} $pad={11}>
              <IconButtons names={["save", "docs"]} size={12} />
              <Divider />
              <IconButtons names={["scissors", "wrench", "flag"]} size={12} />
              <Divider />
              <IconButtons names={["eye", "magnet", "brackets", "zoom"]} size={11} />
            </ControlRow>
          </Controls>
          <Right>
            <Logo>
              <LogoText>
                edi<LogoTail>son</LogoTail>
              </LogoText>
              <Icon name="mark" size={10} />
            </Logo>
            <Pads>
              {pads.map((n) =>
                n === "run" ? (
                  <Pad key={n}>
                    RUN
                    <Icon name="down" size={6} />
                  </Pad>
                ) : (
                  <Pad key={n} aria-label={n}>
                    <Icon name={n} size={13} />
                  </Pad>
                ),
              )}
            </Pads>
          </Right>
        </Panel>
        <Info>
          <Field $w={43}>
            <FieldName>SAMPLERATE</FieldName>
            <FieldValue>44100Hz</FieldValue>
          </Field>
          <Field $w={33}>
            <FieldName>FORMAT</FieldName>
            <FieldValue $on>
              32 <Icon name="format" size={8} />
            </FieldValue>
          </Field>
          <Field $w={29}>
            <FieldName>TEMPO</FieldName>
            <FieldValue>130BPM</FieldValue>
          </Field>
          <Field $w={23}>
            <FieldName>FREE</FieldName>
          </Field>
          <Field>
            <FieldName>TITLE</FieldName>
          </Field>
          <Spacer />
          <Field $w={26}>
            <FieldName>LENGTH</FieldName>
          </Field>
          <Field $end>
            <FieldName>MIN:SEC:MS</FieldName>
            <span>0:000</span>
          </Field>
        </Info>
      </EdisonMain>
      <Level>
        <LevelBar />
      </Level>
    </EdisonTop>
    <Wave>Click to load a sample</Wave>
    <ScrollBar>
      <ScrollButton aria-label="Scroll left">‹</ScrollButton>
      <ScrollButton aria-label="Scroll right">›</ScrollButton>
    </ScrollBar>
    <Footer>
      <FooterButton aria-label="Options" $ink="#fff">
        <Icon name="down" size={7} />
      </FooterButton>
      <FooterButton aria-label="Undo" $ink="#c3c8d4">
        <Icon name="undo" size={9} />
      </FooterButton>
      <FooterButton aria-label="Wave" $ink="#dfe2ea">
        <Icon name="cross" size={10} />
      </FooterButton>
      {["bowtie", "ramp", "squeeze", "nodes"].map((n) => (
        <FooterButton key={n} aria-label={n}>
          <Icon name={n === "squeeze" ? "bowtie" : n} size={9} />
        </FooterButton>
      ))}
      <Spacer />
      <FooterButton aria-label="Scroll" $ink="#dfe2ea">
        <Icon name="arrow" size={10} />
      </FooterButton>
      <FooterButton aria-label="Regions" $ink="#e0704f">
        <Icon name="list" size={10} />
      </FooterButton>
      {["list", "flag", "snow", "curve", "magnet", "both"].map((n) => (
        <FooterButton key={n} aria-label={n} $ink={n === "list" ? "#33394a" : undefined}>
          <Icon name={n} size={9} />
        </FooterButton>
      ))}
    </Footer>
    <Pointer>
      <Icon name="pointerHand" size={12} />
    </Pointer>
  </EdisonWindow>
);

const Painting = () => (
  <Wallpaper width="146" height="300" viewBox="0 0 146 300" aria-hidden="true">
    <defs>
      <radialGradient id="bloom">
        <stop offset="0" stopColor="#a04a9c" />
        <stop offset="1" stopColor="#7a3798" stopOpacity="0" />
      </radialGradient>
    </defs>
    <path fill="#602c85" opacity="0.3" d="M26 145L60 130 100 160 146 170V205L100 200z" />
    <path fill="#6a2590" opacity="0.6" d="M0 195L66 180 100 215 82 240 70 300H0z" />
    <path fill="#7a3ea2" opacity="0.7" d="M0 180L27 220 0 262z" />
    <path fill="#843a96" opacity="0.6" d="M74 240L110 224 146 218V230L84 246z" />
    <path fill="#8448ae" d="M98 248L104 238 112 241 118 234 126 239 134 233 146 235V244L136 243 130 250 120 249 114 258 106 262 100 274 101 284 94 299 86 290 90 278 87 266 94 260 92 252z" />
    <path fill="#7d42a8" d="M72 262L80 258 84 268 82 280 90 300H70L74 286 69 274z" />
    <circle cx="140" cy="278" r="36" fill="url(#bloom)" />
    <path stroke="#7d4aa5" strokeWidth="2" fill="none" d="M96 214l6-1M105 210v8M44 206h3M48 225l18-1" />
  </Wallpaper>
);

export default function App() {
  return (
    <Screen>
      <GlobalStyle />
      <MainToolbar />
      <Desktop>
        <Painting />
        <DesktopStrip />
        <Mixer />
        <Edison />
      </Desktop>
    </Screen>
  );
}
